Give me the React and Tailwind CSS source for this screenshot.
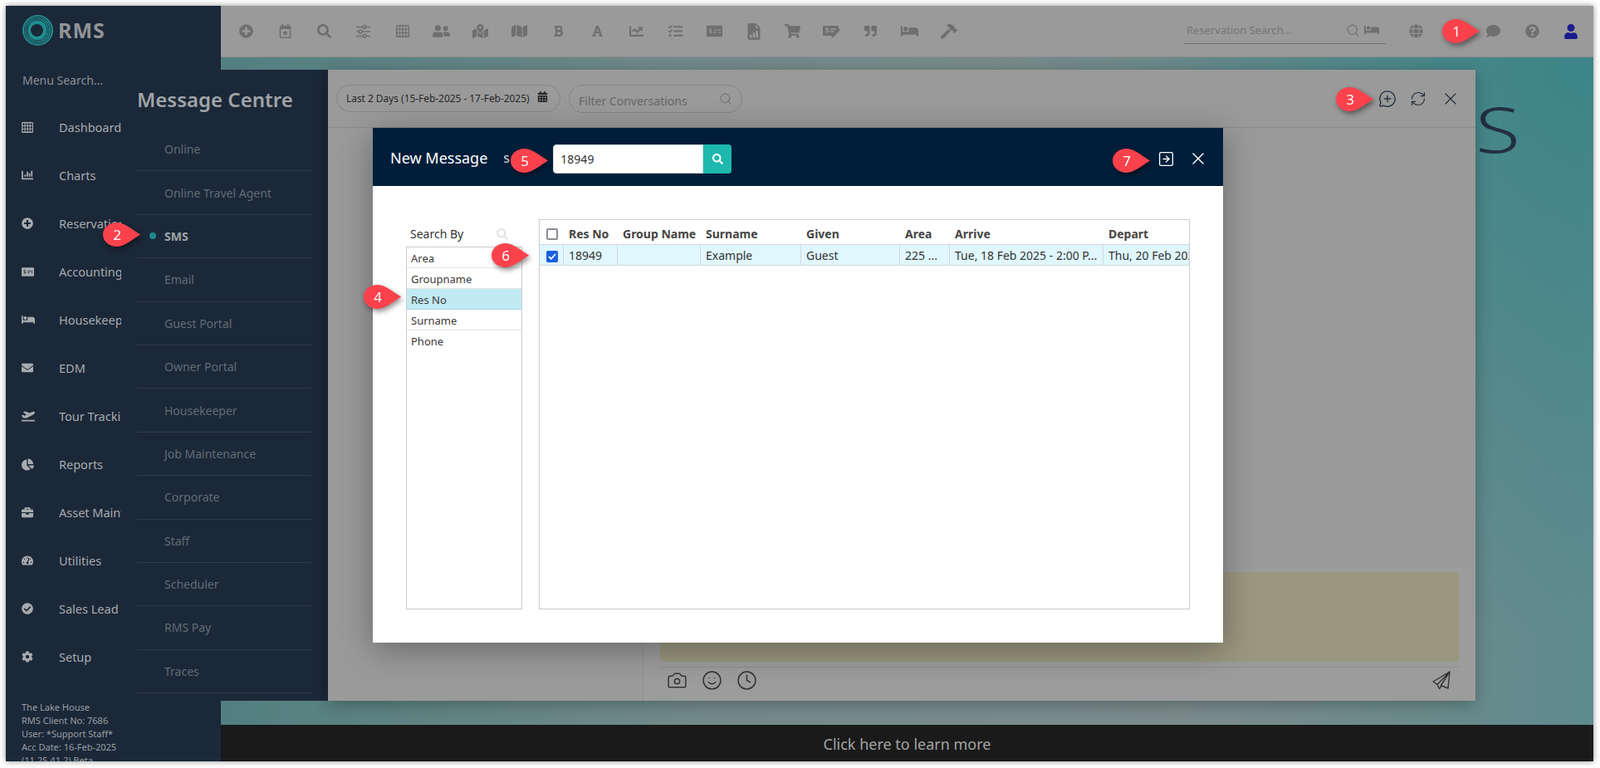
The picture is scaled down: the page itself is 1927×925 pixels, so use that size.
import React from 'react';
import {
  FaPlusCircle, FaSearch, FaUserFriends, FaMapMarkedAlt, FaMap, FaBold, FaFont, FaChartLine, FaTasks,
  FaMoneyCheckAlt, FaShoppingCart, FaQuoteRight, FaBed, FaHammer, FaGlobe, FaComment, FaQuestionCircle, FaUser,
  FaChartBar, FaEnvelope, FaPlaneDeparture, FaChartPie, FaBriefcase, FaTachometerAlt, FaCheckCircle, FaCog, FaCalendarAlt,
} from 'react-icons/fa';
import { BsFileEarmarkBarGraphFill } from 'react-icons/bs';
import { Search, MessageCirclePlus, RefreshCw, X, SquareArrowRight, Camera, Smile, Clock } from 'lucide-react';

const GridIcon = ({ w = 16, h = 15, cell = '#9a9a9a' }) => (
  <svg width={w} height={h} viewBox="0 0 16 15" fill="currentColor">
    <rect width="16" height="15" rx="1.500" />
    {[1.5, 5.1, 8.7, 12.3].map((x) =>
      [1.5, 5.8, 10.1].map((y) => <rect key={`${x}-${y}`} x={x} y={y} width="2.400" height="3.200" fill={cell} />)
    )}
  </svg>
);
const CalStar = () => (
  <svg width="15" height="17" viewBox="0 0 16 20" fill="currentColor">
    <rect x="3" y="0" width="2.400" height="4" /><rect x="10.600" y="0" width="2.400" height="4" />
    <path fillRule="evenodd" d="M1 2.500h14a1 1 0 0 1 1 1V19a1 1 0 0 1-1 1H1a1 1 0 0 1-1-1V3.500a1 1 0 0 1 1-1zM1.800 7v11.200h12.400V7z" />
    <path d="M8 8.600l1.200 2.600 2.800.3-2.100 1.900.6 2.800L8 14.800l-2.500 1.400.6-2.800L4 11.500l2.800-.3z" />
  </svg>
);
const Sliders = () => (
  <svg width="17" height="16" viewBox="0 0 17 16" fill="none" stroke="currentColor" strokeWidth="1.500">
    <path d="M0 2.500h8M12 2.500h5M0 8h3M7 8h10M0 13.500h8M12 13.500h5" />
    <circle cx="10" cy="2.500" r="1.900" /><circle cx="5" cy="8" r="1.900" /><circle cx="10" cy="13.500" r="1.900" />
  </svg>
);
const CheckEdit = () => (
  <svg width="21" height="17" viewBox="0 0 21 17" fill="currentColor">
    <path d="M1.200 0h16.600A1.200 1.200 0 0 1 19 1.200V5l-7 7H1.200A1.200 1.200 0 0 1 0 10.800V1.200z" transform="translate(0 2)" />
    <path d="M19.500 5.500l1.500 1.500-8 8.500-2.500.8.700-2.600z" />
    <text x="2.500" y="11" fontSize="9" fontWeight="700" fill="#9a9a9a" fontFamily="Noto Sans">$</text>
    <path d="M9 6h7M9 9h4" stroke="#9a9a9a" strokeWidth="1.300" />
  </svg>
);
const Plane = () => (
  <svg width="22" height="23" viewBox="0 0 22 23" fill="none" stroke="currentColor" strokeWidth="1.400" strokeLinejoin="round">
    <path d="M21 1L1 13l5 3.500L21 1zM21 1l-2 20-8.500-3.500L21 1zM6 16.500l2.500 5 2.800-3.500" />
  </svg>
);
const Logo = () => (
  <svg width="37" height="37" viewBox="0 0 37 37" fill="none">
    <circle cx="18.500" cy="18.500" r="18.500" fill="#1f8f90" />
    <ellipse cx="18.500" cy="18.500" rx="16" ry="16.500" strokeWidth="0.900" stroke="#1b2838" />
    <ellipse cx="18.300" cy="18.500" rx="14" ry="14.500" strokeWidth="0.900" stroke="#1b2838" />
    <ellipse cx="18" cy="18.500" rx="12" ry="12.500" strokeWidth="0.900" stroke="#1b2838" />
    <circle cx="17.500" cy="18.500" r="7.500" fill="#1b2838" />
  </svg>
);

const topIcons = [
  <FaPlusCircle size={17} />, <CalStar />, <FaSearch size={17} />, <Sliders />, <GridIcon />, <FaUserFriends size={21} />,
  <FaMapMarkedAlt size={19} />, <FaMap size={19} />, <FaBold size={15} />, <FaFont size={15} />, <FaChartLine size={17} />, <FaTasks size={17} />,
  <FaMoneyCheckAlt size={19} />, <BsFileEarmarkBarGraphFill size={20} />, <FaShoppingCart size={19} />, <CheckEdit />, <FaQuoteRight size={15} />, <FaBed size={21} />, <FaHammer size={20} />,
];

const sideItems = [
  ['Dashboard', <GridIcon w={14} h={13} cell="#1b2838" />], ['Charts', <FaChartBar size={14} />], ['Reservations', <FaPlusCircle size={14} />],
  ['Accounting', <FaMoneyCheckAlt size={15} />], ['Housekeeping', <FaBed size={16} />], ['EDM', <FaEnvelope size={14} />],
  ['Tour Tracking', <FaPlaneDeparture size={16} />], ['Reports', <FaChartPie size={15} />], ['Asset Maintenance', <FaBriefcase size={14} />],
  ['Utilities', <FaTachometerAlt size={14} />], ['Sales Lead', <FaCheckCircle size={14} />], ['Setup', <FaCog size={14} />],
];

const subItems = ['Online', 'Online Travel Agent', 'SMS', 'Email', 'Guest Portal', 'Owner Portal', 'Housekeeper', 'Job Maintenance', 'Corporate', 'Staff', 'Scheduler', 'RMS Pay', 'Traces'];

const searchBy = ['Area', 'Groupname', 'Res No', 'Surname', 'Phone'];

const columns = [
  ['Res No', '18949', 'w-[65px]'],
  ['Group Name', '', 'w-[100px]'],
  ['Surname', 'Example', 'w-[121px]'],
  ['Given', 'Guest', 'w-[119px]'],
  ['Area', '225 ...', 'w-[60px]'],
  ['Arrive', 'Tue, 18 Feb 2025 - 2:00 P...', 'w-[185px]'],
  ['Depart', 'Thu, 20 Feb 2025 - 10:00 AM', 'w-[104px]'],
];

const Badge = ({ n, className }) => (
  <div className={`absolute w-[45px] h-[29px] drop-shadow-[2px_3px_3px_rgba(0,0,0,0.45)] ${className}`}>
    <svg width="45" height="29" viewBox="0 0 45 29" className="absolute inset-0">
      <path d="M17 0C26 0 36 9 45 14.500 36 20 26 29 17 29 7 29 0 22.500 0 14.500 0 6.500 7 0 17 0Z" fill="#fb424c" />
    </svg>
    <span className="absolute left-0 top-0 w-[34px] h-[29px] flex items-center justify-center text-white text-[17px] font-['Liberation_Sans',sans-serif]">{n}</span>
  </div>
);

export default function App() {
  return (
    <div className="relative w-[1927px] h-[925px] overflow-hidden bg-white font-['Noto_Sans',sans-serif]">
      {/* application frame */}
      <div className="absolute left-[7px] top-[7px] w-[1912px] h-[910px] flex shadow-[0_0_7px_rgba(0,0,0,0.45)]">
        <aside className="w-[259px] shrink-0 h-full bg-[#1b2838] flex flex-col overflow-hidden">
          <div className="h-[77px] pl-[20px] pt-[11px] flex items-start gap-[6px]">
            <Logo />
            <span className="text-[25px] leading-[37px] font-bold font-['Inter',sans-serif] text-[#929497] tracking-[1px]">RMS</span>
          </div>
          <div className="pl-[20px] h-[26px] text-[14px] leading-[26px] text-[#8b9197]">Menu Search...</div>
          <div className="pl-[19px] pt-[31px] flex flex-col">
            {sideItems.map(([label, icon]) => (
              <div key={label} className="h-[58px] flex items-start">
                <span className="w-[45px] shrink-0 h-[24px] flex items-center text-[#a7abaf]">{icon}</span>
                <span className="text-[14.500px] leading-[24px] text-[#a7abaf] whitespace-nowrap">{label}</span>
              </div>
            ))}
          </div>
          <div className="mt-auto pl-[19px] text-[11px] leading-[16px] text-[#9a9fa3] h-[73px] overflow-hidden">
            <div>The Lake House</div>
            <div>RMS Client No: 7686</div>
            <div>User: *Support Staff*</div>
            <div>Acc Date: 16-Feb-2025</div>
            <div>(11.25.41.2) Beta</div>
          </div>
        </aside>
        <div className="flex-1 flex flex-col min-w-0">
          <header className="h-[62px] shrink-0 bg-[#9a9a9a] border-b border-[#8e8e8e] flex items-center">
            <div className="flex items-center pl-[7px] text-[#6f6f6f]">
              {topIcons.map((ic, i) => (
                <span key={i} className="w-[47px] h-[30px] flex items-center justify-center">{ic}</span>
              ))}
            </div>
            <div className="ml-auto flex items-center text-[#6f6f6f] pr-[4px]">
              <div className="w-[243px] h-[32px] border-b border-[#707070] flex items-center pl-[3px] mr-[13px] relative top-[-1px]">
                <span className="text-[13px] pt-[1px] text-[#757575]">Reservation Search...</span>
                <Search size={17} strokeWidth={1.600} className="ml-auto mr-[5px]" />
                <FaBed size={18} className="mr-[8px]" />
              </div>
              <span className="w-[47px] flex justify-center"><FaGlobe size={17} /></span>
              <span className="w-[46px]" />
              <span className="w-[47px] flex justify-center"><FaComment size={17} /></span>
              <span className="w-[47px] flex justify-center"><FaQuestionCircle size={17} /></span>
              <span className="w-[46px] pr-[1px] flex justify-center text-[#1b1b8c]"><FaUser size={18} /></span>
            </div>
          </header>
          <main className="flex-1 bg-[radial-gradient(circle_at_100%_0%,#3c8588_0%,rgba(60,133,136,0)_38%),linear-gradient(90deg,#527f80_0%,#738a8a_35%,#7c8b8b_70%,#5f8b8e_100%)]" />
          <footer className="h-[44px] shrink-0 pt-[3px] bg-[#1a1a1a] flex items-center justify-center text-[18px] text-[#a4a4a4]">
            Click here to learn more
          </footer>
        </div>
      </div>

      {/* large heading, hidden by the panel but for its last letter */}
      <div className="absolute left-[1777px] top-[111px] origin-left scale-x-[1.3] text-[76px] leading-[88px] font-light font-['Roboto',sans-serif] text-[#22303f]">S</div>

      {/* Message Centre flyout */}
      <div className="absolute left-[146px] top-[84px] w-[249px] h-[760px] bg-[#1b2838] pl-[19px] pr-[20px]">
        <h2 className="h-[70px] pt-[19px] text-[24px] leading-[34px] font-semibold text-[#a0a4a8] whitespace-nowrap">Message Centre</h2>
        {subItems.map((s) => (
          <div key={s} className={`relative h-[52.400px] border-b border-[#303b48] pl-[33px] flex items-center text-[14px] ${s === 'SMS' ? 'font-bold text-[#a0a4a8]' : 'text-[#626c75]'}`}>
            {s === 'SMS' && <span className="absolute left-[15px] w-[8px] h-[8px] rounded-full bg-[#1f8a8c]" />}
            {s}
          </div>
        ))}
      </div>

      {/* Conversations panel */}
      <div className="absolute left-[395px] top-[84px] w-[1382px] h-[760px] bg-[#9a9a9a] shadow-[0_4px_18px_rgba(0,0,0,0.28)] flex flex-col">
        <div className="h-[70px] shrink-0 border-b border-[#8a8a8a] flex items-center pl-[10px] pr-[18px]">
          <div className="w-[270px] h-[33px] rounded-full border border-[#858585] flex items-center pl-[11px] pr-[14px]">
            <span className="text-[11.900px] text-[#262626] whitespace-nowrap">Last 2 Days (15-Feb-2025 - 17-Feb-2025)</span>
            <FaCalendarAlt size={13} className="ml-auto mb-[4px] text-[#262626]" />
          </div>
          <div className="ml-[10px] w-[209px] h-[34px] rounded-full border border-[#858585] flex items-center pl-[11px] pr-[11px]">
            <span className="text-[14px] pt-[5px] text-[#676767] whitespace-nowrap">Filter Conversations</span>
            <Search size={16} strokeWidth={1.400} className="ml-auto text-[#676767]" />
          </div>
          <div className="ml-auto flex items-center text-[#24303c]">
            <MessageCirclePlus size={22} strokeWidth={1.500} />
            <RefreshCw size={20} strokeWidth={1.400} className="ml-[16px]" />
            <X size={24} strokeWidth={1.300} className="ml-[17px]" />
          </div>
        </div>
        <div className="flex-1 flex min-h-0">
          <div className="w-[380px] shrink-0 border-r border-[#919191]" />
          <div className="flex-1 flex flex-col">
            <div className="flex-1" />
            <div className="h-[160px] shrink-0 bg-[#9c9c9c] px-[20px] pt-[5px] flex flex-col">
              <div className="h-[108px] rounded-[4px] bg-[#99977e]" />
              <div className="mt-[6px] border-t border-[#8e8e8e] pt-[3px] flex items-center text-[#333333]">
                <Camera size={25} strokeWidth={1.400} className="ml-[8px]" />
                <Smile size={25} strokeWidth={1.400} className="ml-[17px]" />
                <Clock size={25} strokeWidth={1.400} className="ml-[17px]" />
                <span className="ml-auto mr-[10px]"><Plane /></span>
              </div>
            </div>
          </div>
        </div>
      </div>

      {/* New Message modal */}
      <div className="absolute left-[449px] top-[154px] w-[1024px] h-[620px] bg-white shadow-[0_8px_38px_rgba(0,0,0,0.33)] flex flex-col">
        <div className="h-[70px] shrink-0 bg-[#001e3a] flex items-center pl-[21px] pr-[18px]">
          <span className="text-[18px] pt-[2px] text-white whitespace-nowrap">New Message</span>
          <span className="ml-[19px] w-[60px] pt-[2px] text-[16px] text-[#d5d8dc]">s</span>
          <input readOnly value="18949" className="w-[181px] h-[35px] mt-[5px] rounded-l-[4px] bg-white pl-[8px] text-[14px] text-[#333333] outline-none border border-[#d8d8d8]" />
          <button className="w-[34px] h-[35px] mt-[5px] rounded-r-[4px] bg-[#1db9ae] flex items-center justify-center text-white"><FaSearch size={13} /></button>
          <div className="ml-auto mt-[4px] flex items-center text-white">
            <SquareArrowRight size={21} strokeWidth={1.500} />
            <X size={24} strokeWidth={1.400} className="ml-[16px]" />
          </div>
        </div>
        <div className="flex-1 flex pl-[40px] pr-[40px] pt-[40px] pb-[40px]">
          <div className="w-[140px] shrink-0 flex flex-col">
            <div className="h-[33px] pt-[2px] flex items-center pl-[5px] pr-[17px] text-[14px] text-[#333333]">
              <span>Search By</span>
              <FaSearch size={14} className="ml-auto text-[#e2e6e8]" />
            </div>
            <div className="flex-1 border border-[#cccccc] flex flex-col">
              {searchBy.map((s) => (
                <div key={s} className={`h-[25px] shrink-0 pl-[5px] pt-[3px] flex items-center text-[13px] text-[#3a3a3a] ${s === 'Res No' ? 'bg-[#c1eaf3] border-b border-[#a9d6e0]' : s === 'Phone' ? '' : 'border-b border-[#e2e2e2]'}`}>{s}</div>
              ))}
            </div>
          </div>
          <div className="w-[784px] ml-[20px] shrink-0 border border-[#cccccc] flex flex-col overflow-hidden">
            <div className="h-[30px] shrink-0 pt-[3px] flex items-center border-b border-[#d4d8da]">
              <span className="w-[29px] shrink-0 pl-[8px]">
                <span className="block w-[14px] h-[14px] border-2 border-[#8b8b98] rounded-[2px] mt-[1px]" />
              </span>
              {columns.map(([h, , w]) => (
                <span key={h} className={`${w} shrink-0 pl-[6px] text-[14px] font-bold text-[#454545] whitespace-nowrap overflow-hidden`}>{h}</span>
              ))}
            </div>
            <div className="h-[25px] shrink-0 flex items-center bg-[#e0f7fe] border-b border-[#d4d8da]">
              <span className="w-[29px] h-full shrink-0 pl-[8px] border-r border-[#d4d8da] flex items-center">
                <span className="w-[14px] h-[14px] mt-[3px] bg-[#1a5fe0] rounded-[2px] flex items-center justify-center">
                  <svg width="10" height="8" viewBox="0 0 10 8" fill="none" stroke="#ffffff" strokeWidth="1.800"><path d="M1 4l2.800 2.800L9 1" /></svg>
                </span>
              </span>
              {columns.map(([h, v, w]) => (
                <span key={h} className={`${w} h-full shrink-0 pl-[6px] pt-[1px] flex items-center text-[14px] text-[#333333] whitespace-nowrap overflow-hidden ${h === 'Depart' ? '' : 'border-r border-[#d4d8da]'}`}>{v}</span>
              ))}
            </div>
          </div>
        </div>
      </div>

      {/* callouts */}
      <Badge n="1" className="left-[1737px] top-[23px]" />
      <Badge n="2" className="left-[124px] top-[268px]" />
      <Badge n="3" className="left-[1609px] top-[105px]" />
      <Badge n="4" className="left-[438px] top-[343px]" />
      <Badge n="5" className="left-[615px] top-[179px]" />
      <Badge n="6" className="left-[592px] top-[293px]" />
      <Badge n="7" className="left-[1340px] top-[179px]" />
    </div>
  );
}
